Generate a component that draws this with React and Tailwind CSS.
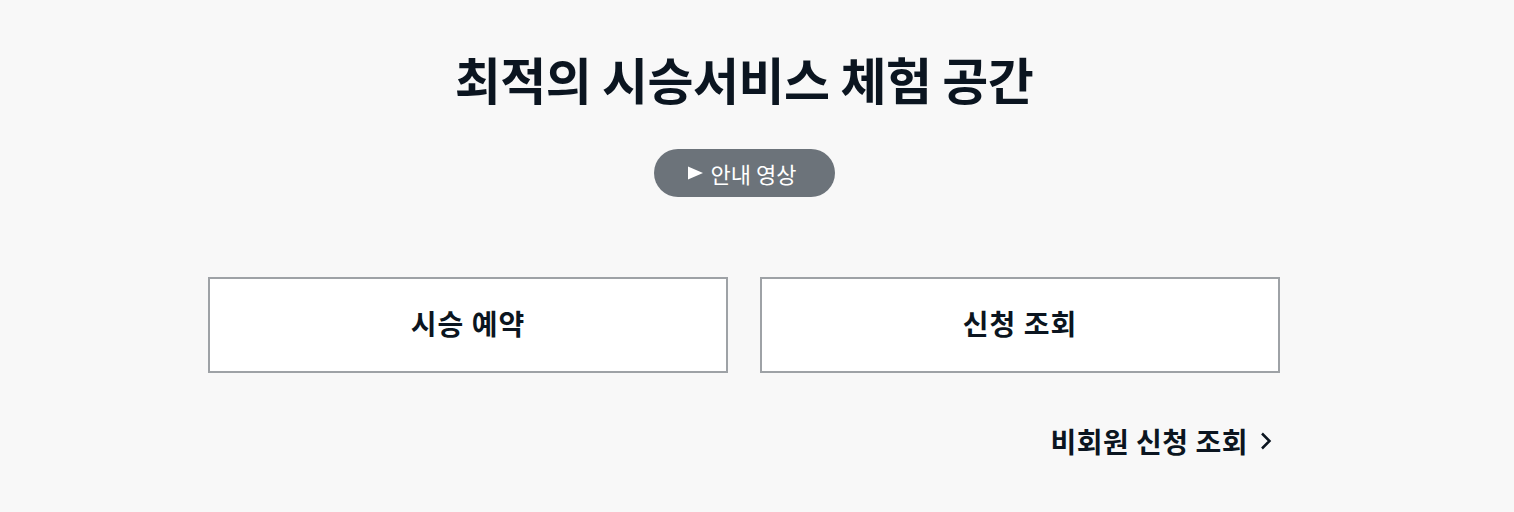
import React from "react";

const font = { fontFamily: '"Noto Sans CJK KR", "Noto Sans", sans-serif' };

export default function App() {
  return (
    <div
      className="min-h-screen bg-[#f8f8f8] pr-[26px] text-[#0b1520]"
      style={font}
    >
      <div className="mx-auto w-[1072px] pt-[43px]">
        {/* 타이틀 */}
        <h1 className="text-center text-[50px] font-bold leading-[70px] tracking-[-0.5px]">
          최적의 시승서비스 체험 공간
        </h1>

        {/* 안내 영상 버튼 */}
        <div className="mt-[36px] flex justify-center">
          <button className="flex h-[48px] w-[181px] items-center justify-center gap-[8px] rounded-full bg-[#6c737a] pr-[4px] text-[22px] font-normal text-white">
            <svg width="15" height="14" viewBox="0 0 15 14">
              <path d="M0 0.5L15 7L0 13.5Z" fill="currentColor" />
            </svg>
            안내 영상
          </button>
        </div>

        {/* 메뉴 */}
        <div className="mt-[80px] grid grid-cols-2 gap-[32px]">
          <button className="h-[96px] border-2 border-[#9ea2a6] bg-white pb-[4px] text-[28px] font-bold tracking-[1px]">
            시승 예약
          </button>
          <button className="h-[96px] border-2 border-[#9ea2a6] bg-white pb-[4px] text-[28px] font-bold tracking-[1px]">
            신청 조회
          </button>
        </div>

        <div className="mt-[48px] flex justify-end pr-[8px]">
          <a href="#" className="flex items-center gap-[12px] text-[28px] font-bold leading-[40px] tracking-[0.5px]">
            비회원 신청 조회
            <svg width="12" height="18" viewBox="0 0 12 18" fill="none">
              <path d="M2 1.5l7.5 7.5-7.5 7.5" stroke="currentColor" strokeWidth="2.5" />
            </svg>
          </a>
        </div>
      </div>
    </div>
  );
}
